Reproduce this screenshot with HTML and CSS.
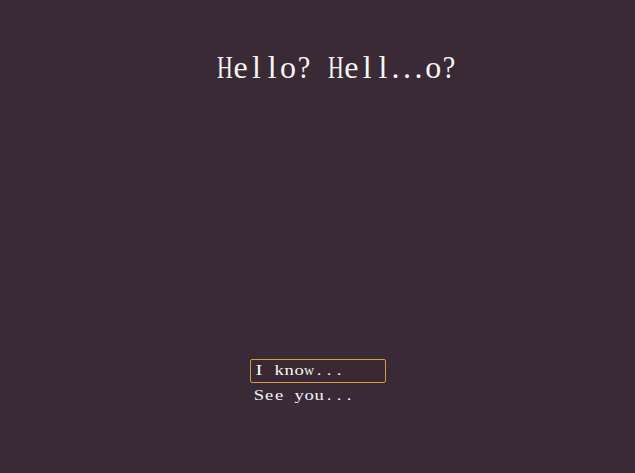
FILE: index.html
```html
<!DOCTYPE html>
<html>
<head>
<meta charset="utf-8">
<link rel="stylesheet" href="styles.css">
</head>
<body>
<div class="screen">
  <h1 class="title"><span class="c u">H</span><span class="c">e</span><span class="c">l</span><span class="c">l</span><span class="c">o</span><span class="c q">?</span><span class="c"> </span><span class="c u">H</span><span class="c">e</span><span class="c">l</span><span class="c">l</span><span class="c d">.</span><span class="c d">.</span><span class="c d">.</span><span class="c z"> </span><span class="c">o</span><span class="c q">?</span></h1>
  <ul class="menu">
    <li class="item selected"><span class="m wi">I</span><span class="m"> </span><span class="m">k</span><span class="m">n</span><span class="m">o</span><span class="m nw">w</span><span class="m">.</span><span class="m">.</span><span class="m">.</span></li>
    <li class="item"><span class="m">S</span><span class="m">e</span><span class="m">e</span><span class="m"> </span><span class="m">y</span><span class="m">o</span><span class="m">u</span><span class="m">.</span><span class="m">.</span><span class="m">.</span></li>
  </ul>
</div>
</body>
</html>
```

FILE: styles.css
```css
html, body {
  margin: 0;
  padding: 0;
  background: #392a35;
  width: 100%;
  height: 100%;
  overflow: hidden;
}
.screen {
  display: flex;
  flex-direction: column;
  height: 473px;
  color: #f6f6f6;
  font-family: "Liberation Serif", serif;
}
.title {
  margin: 47px 0 0 217px;
  font-size: 32px;
  font-weight: normal;
  line-height: 40px;
  height: 40px;
  white-space: pre;
  display: flex;
}
.c {
  display: inline-flex;
  justify-content: center;
  width: 15.8px;
}
.c.u {
  transform: scaleX(0.68);
}
.c.q {
  transform: scaleX(0.88);
}
.c.d {
  width: 11.5px;
  transform: translateX(-1px);
}
.c.z {
  width: 0;
  overflow: hidden;
}
.menu {
  list-style: none;
  margin: 272px auto 0;
  padding: 0;
  width: 136px;
  display: flex;
  flex-direction: column;
  gap: 1px;
}
.item {
  box-sizing: border-box;
  height: 24px;
  border: 1px solid transparent;
  border-radius: 2px;
  padding: 0 0 3px 3px;
  font-size: 15.5px;
  line-height: 19px;
  white-space: pre;
  display: flex;
}
.m {
  display: inline-flex;
  justify-content: center;
  width: 10.1px;
  transform: scaleX(1.2);
}
.m.wi {
  transform: scaleX(1.35);
}
.m.nw {
  transform: scaleX(0.9);
}
.selected {
  border-color: #d69b42;
  background: #3a2833;
}
```
